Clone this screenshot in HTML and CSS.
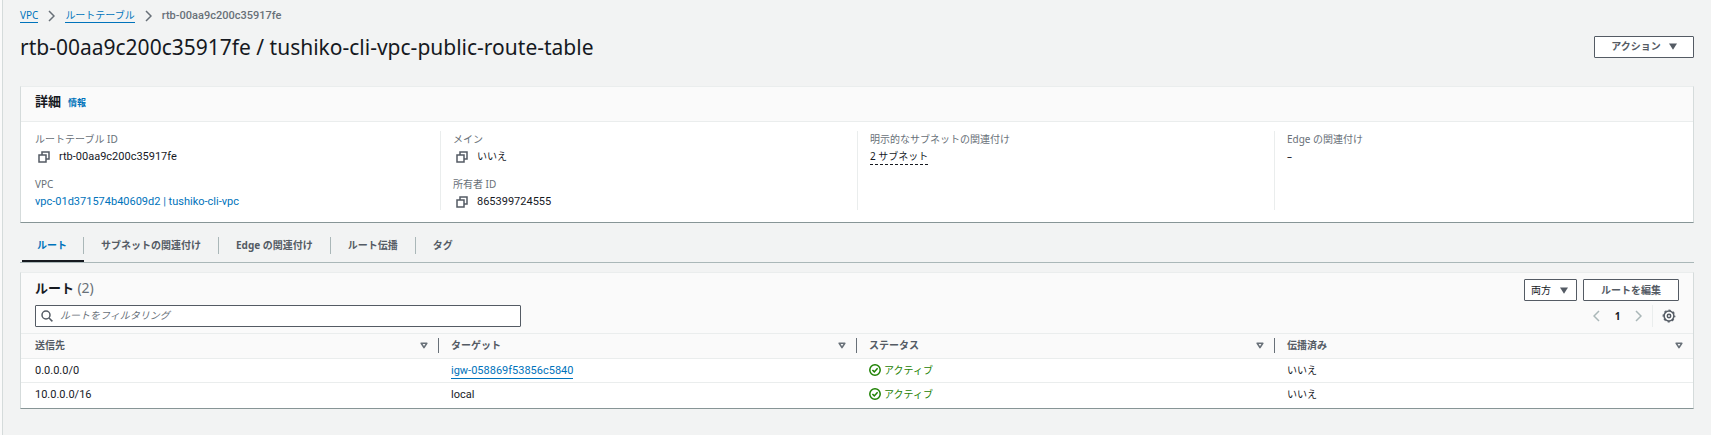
FILE: index.html
```html
<!DOCTYPE html>
<html lang="ja">
<head>
<meta charset="utf-8">
<title>ルートテーブル</title>
<link rel="stylesheet" href="styles.css">
</head>
<body>
<svg class="defs" aria-hidden="true">
  <symbol id="copy" viewBox="0 0 12 12"><path d="M1 4h7v7H1zM4 4V1h7v7H8" fill="none" stroke="currentColor" stroke-width="1.5"/></symbol>
  <symbol id="check" viewBox="0 0 12 12"><circle cx="6" cy="6" r="5.2" fill="none" stroke="currentColor" stroke-width="1.5"/><path d="M3.4 6l1.9 1.9 3.3-3.6" fill="none" stroke="currentColor" stroke-width="1.5"/></symbol>
  <symbol id="caret" viewBox="0 0 8 7"><path d="M0 .5h8L4 6.8z" fill="currentColor"/></symbol>
  <symbol id="sort" viewBox="0 0 8 7"><path d="M1.2 1.2h5.6L4 5.6z" fill="none" stroke="currentColor" stroke-width="1.6" stroke-linejoin="round"/></symbol>
  <symbol id="right" viewBox="0 0 7 12"><path d="M1 1l5 5-5 5" fill="none" stroke="currentColor" stroke-width="1.5"/></symbol>
  <symbol id="left" viewBox="0 0 7 12"><path d="M6 1L1 6l5 5" fill="none" stroke="currentColor" stroke-width="1.5"/></symbol>
</svg>
<div class="app">
  <div class="rail"></div>
  <main class="main">
    <nav class="crumbs">
      <a href="#">VPC</a>
      <svg class="crumb-sep"><use href="#right"/></svg>
      <a href="#">ルートテーブル</a>
      <svg class="crumb-sep"><use href="#right"/></svg>
      <span class="current latin">rtb-00aa9c200c35917fe</span>
    </nav>
    <header class="page-head">
      <h1>rtb-00aa9c200c35917fe / tushiko-cli-vpc-public-route-table</h1>
      <button class="btn action">アクション <svg class="caret"><use href="#caret"/></svg></button>
    </header>

    <section class="card details">
      <div class="card-head"><h2>詳細</h2><a class="info" href="#">情報</a></div>
      <div class="columns">
        <dl class="column">
          <div><dt>ルートテーブル ID</dt><dd class="copyable latin"><svg class="copy"><use href="#copy"/></svg>rtb-00aa9c200c35917fe</dd></div>
          <div><dt>VPC</dt><dd class="latin"><a href="#">vpc-01d371574b40609d2 | tushiko-cli-vpc</a></dd></div>
        </dl>
        <dl class="column">
          <div><dt>メイン</dt><dd class="copyable"><svg class="copy"><use href="#copy"/></svg>いいえ</dd></div>
          <div><dt>所有者 ID</dt><dd class="copyable latin"><svg class="copy"><use href="#copy"/></svg>865399724555</dd></div>
        </dl>
        <dl class="column">
          <div><dt>明示的なサブネットの関連付け</dt><dd><button class="popover">2 サブネット</button></dd></div>
        </dl>
        <dl class="column">
          <div><dt>Edge の関連付け</dt><dd>–</dd></div>
        </dl>
      </div>
    </section>

    <div class="tabs" role="tablist">
      <button class="tab selected" role="tab" aria-selected="true"><span>ルート</span></button>
      <button class="tab" role="tab"><span>サブネットの関連付け</span></button>
      <button class="tab" role="tab"><span>Edge の関連付け</span></button>
      <button class="tab" role="tab"><span>ルート伝播</span></button>
      <button class="tab" role="tab"><span>タグ</span></button>
    </div>

    <section class="card routes">
      <div class="tools">
        <h2>ルート <span class="count">(2)</span></h2>
        <div class="buttons">
          <div class="select">
            <select aria-label="表示"><option>両方</option></select>
            <svg class="caret"><use href="#caret"/></svg>
          </div>
          <button class="btn edit">ルートを編集</button>
        </div>
        <label class="search">
          <svg class="glass" viewBox="0 0 12 12"><circle cx="5" cy="5" r="4" fill="none" stroke="currentColor" stroke-width="1.5"/><path d="M8 8l3.4 3.4" stroke="currentColor" stroke-width="1.5"/></svg>
          <input type="text" placeholder="ルートをフィルタリング" aria-label="ルートをフィルタリング">
        </label>
        <div class="pager">
          <button class="icon-btn" aria-label="前へ"><svg class="arrow"><use href="#left"/></svg></button>
          <button class="icon-btn page">1</button>
          <button class="icon-btn" aria-label="次へ"><svg class="arrow"><use href="#right"/></svg></button>
          <button class="icon-btn gear" aria-label="設定"><svg class="gear-icon" viewBox="0 0 14 14"><circle cx="7" cy="7" r="4.9" fill="none" stroke="currentColor" stroke-width="1.5"/><circle cx="7" cy="7" r="5.8" fill="none" stroke="currentColor" stroke-width="1.2" stroke-dasharray="2.3 2.255" stroke-dashoffset="1.15"/><circle cx="7" cy="7" r="1.7" fill="none" stroke="currentColor" stroke-width="1.5"/></svg></button>
        </div>
      </div>
      <table>
        <thead>
          <tr>
            <th><div class="th">送信先<svg class="sort"><use href="#sort"/></svg></div></th>
            <th><div class="th">ターゲット<svg class="sort"><use href="#sort"/></svg></div></th>
            <th><div class="th">ステータス<svg class="sort"><use href="#sort"/></svg></div></th>
            <th><div class="th">伝播済み<svg class="sort"><use href="#sort"/></svg></div></th>
          </tr>
        </thead>
        <tbody>
          <tr><td class="latin">0.0.0.0/0</td><td class="latin"><a class="underlined" href="#">igw-058869f53856c5840</a></td><td><span class="status"><svg class="check"><use href="#check"/></svg>アクティブ</span></td><td>いいえ</td></tr>
          <tr><td class="latin">10.0.0.0/16</td><td class="latin">local</td><td><span class="status"><svg class="check"><use href="#check"/></svg>アクティブ</span></td><td>いいえ</td></tr>
        </tbody>
      </table>
    </section>
  </main>
</div>
</body>
</html>
```
FILE: styles.css
```css
* { box-sizing: border-box; }
body {
  margin: 0;
  background: #f2f3f3;
  color: #16191f;
  font: 10px/17px "Noto Sans", "Noto Sans CJK JP", sans-serif;
}
button, input, select { font: inherit; color: inherit; }
button { cursor: pointer; }
h1, h2, dl, dd { margin: 0; }
a { color: #0073bb; text-decoration: none; }
svg { flex: none; }
.defs { display: none; }
.latin { font-family: Roboto, "Noto Sans CJK JP", sans-serif; font-size: 11px; }

.app { display: flex; min-height: 100vh; }
.rail { width: 3px; background: #fafafa; border-right: 1px solid #d5dbdb; }
.main { flex: 1; min-width: 0; padding: 7px 17px 24px; }

.crumbs { display: flex; align-items: center; gap: 10px; height: 17px; }
.crumbs a { line-height: 14px; border-bottom: 1px solid #0073bb; }
.crumb-sep { width: 7px; height: 12px; color: #687078; }
.current { color: #687078; font-weight: 500; }

.page-head { display: flex; justify-content: space-between; align-items: center; height: 45px; margin-bottom: 17px; }
h1 { font-size: 21px; line-height: 28px; font-weight: 400; }

.btn {
  display: flex;
  align-items: center;
  justify-content: center;
  gap: 8px;
  height: 22px;
  padding: 0 16px;
  border: 1px solid #545b64;
  border-radius: 1px;
  background: #fff;
  color: #545b64;
  font-weight: 700;
}
.action { min-width: 100px; }
.edit { min-width: 96px; }
.caret { width: 8px; height: 7px; color: #545b64; }

.card {
  background: #fff;
  border: 1px solid #d5dbdb;
  border-top-color: #eaeded;
  border-bottom-color: #879596;
}
.card-head {
  display: flex;
  align-items: center;
  gap: 7px;
  height: 35px;
  padding: 0 14px 6px;
  background: #fafafa;
  border-bottom: 1px solid #eaeded;
}
h2 { font-size: 13px; line-height: 18px; font-weight: 700; }
.info { font-size: 9px; font-weight: 700; padding-top: 3px; }

.columns { display: grid; grid-template-columns: repeat(4, 1fr); padding: 9px 2px 12px; }
.column { display: flex; flex-direction: column; gap: 11px; padding-left: 12px; }
.column + .column { border-left: 1px solid #eaeded; }
dt { color: #687078; }
.copyable { display: flex; align-items: center; gap: 9px; padding-left: 3px; }
.copy { width: 12px; height: 12px; color: #545b64; }
.popover { padding: 0; border: 0; border-bottom: 1px dashed #16191f; background: none; line-height: 15px; }

.tabs { display: flex; height: 40px; margin-bottom: 9px; padding-left: 2px; border-bottom: 1px solid #aab7b8; }
.tab { display: flex; align-items: center; padding: 8px 0 0; border: 0; border-bottom: 2px solid transparent; background: none; color: #545b64; font-weight: 700; }
.tab span { padding: 0 17px; border-right: 1px solid #aab7b8; }
.tab:last-child span { border-right: 0; }
.selected { color: #0073bb; border-bottom-color: #16191f; }
.selected span { padding: 0 16px 0 15px; }

.tools {
  display: grid;
  grid-template-columns: 486px 1fr;
  row-gap: 4px;
  padding: 6px 14px 6px 14px;
  background: #fafafa;
  border-bottom: 1px solid #eaeded;
}
.count { color: #687078; font-size: 14px; font-weight: 400; }
.buttons { display: flex; justify-content: flex-end; gap: 6px; }
.select { position: relative; }
.select select { height: 22px; width: 53px; padding: 0 6px; border: 1px solid #545b64; border-radius: 1px; background: #fff; appearance: none; }
.select .caret { position: absolute; right: 9px; top: 8px; pointer-events: none; }
.search { display: flex; align-items: center; gap: 7px; height: 22px; padding: 0 5px; border: 1px solid #545b64; border-radius: 1px; background: #fff; }
.glass { width: 12px; height: 12px; color: #545b64; }
.search input { flex: 1; min-width: 0; padding: 0 0 2px; border: 0; outline: 0; background: none; }
.search input::placeholder { color: #687078; font-style: italic; opacity: 1; }
.pager { display: flex; justify-content: flex-end; align-items: center; }
.icon-btn { display: flex; align-items: center; justify-content: center; width: 21px; height: 22px; padding: 0; border: 0; background: none; }
.page { font-weight: 700; }
.arrow { width: 7px; height: 12px; color: #aab7b8; }
.gear { width: 27px; margin-left: 3px; padding-left: 5px; border-left: 1px solid #eaeded; color: #545b64; }
.gear-icon { width: 14px; height: 14px; }

table { width: 100%; table-layout: fixed; border-collapse: collapse; }
th { padding: 0; height: 24px; background: #fafafa; text-align: left; color: #545b64; }
.th { display: flex; justify-content: space-between; align-items: center; height: 15px; padding: 0 10px 0 12px; border-right: 1px solid #687078; }
th:first-child .th { padding-left: 14px; }
th:last-child .th { border-right: 0; }
.sort { width: 8px; height: 7px; color: #687078; }
td { height: 24px; padding: 0 12px; border-top: 1px solid #eaeded; }
td:first-child { padding-left: 14px; }
tbody tr:last-child td { height: 26px; padding-bottom: 2px; }
.underlined { display: inline-block; line-height: 15px; border-bottom: 1px solid #0073bb; }
.status { display: flex; align-items: center; gap: 3px; color: #1d8102; }
.check { width: 12px; height: 12px; }
```
